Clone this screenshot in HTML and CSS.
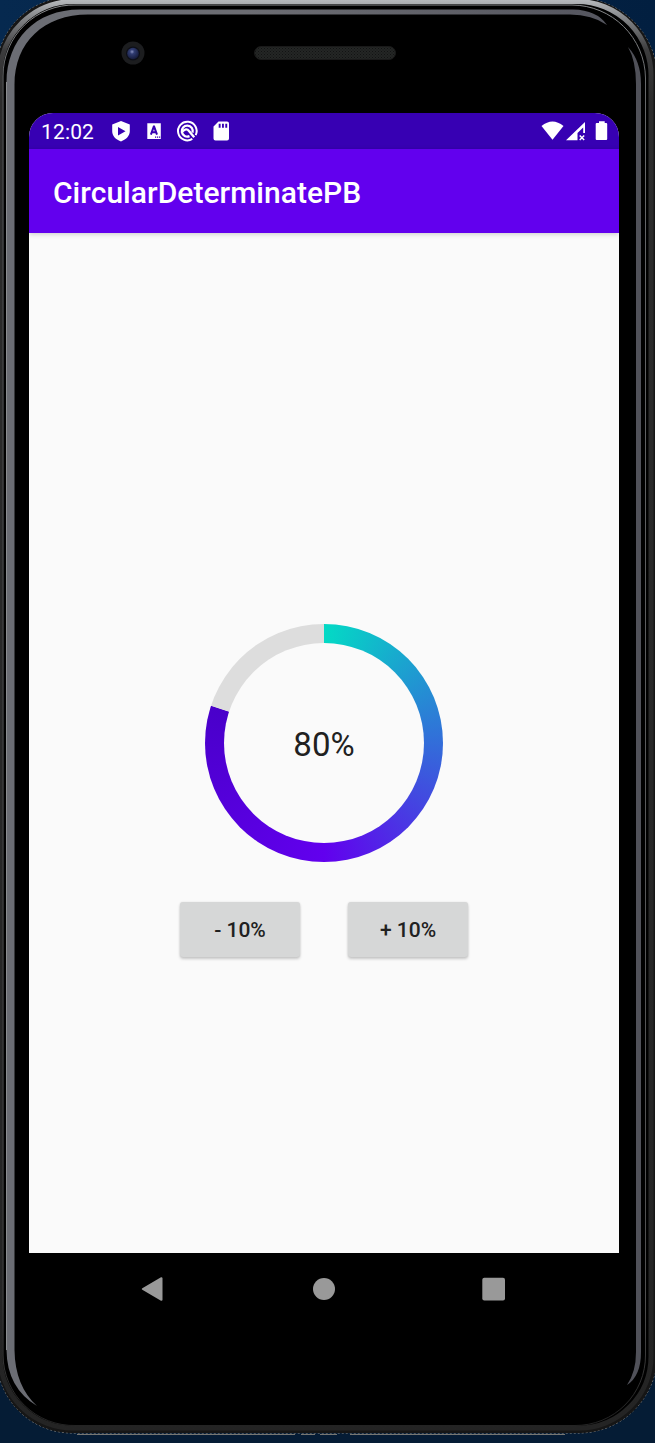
FILE: index.html
```html
<!DOCTYPE html>
<html lang="en">
<head>
<meta charset="utf-8">
<title>CircularDeterminatePB</title>
<link rel="stylesheet" href="styles.css">
</head>
<body>
<div class="device">
  <svg class="frame" viewBox="0 0 655 1443" aria-hidden="true">
    <defs>
      <linearGradient id="edge" gradientUnits="userSpaceOnUse" x1="0" y1="0" x2="0" y2="1443">
        <stop offset="0" stop-color="#b6b9bc"/><stop offset=".012" stop-color="#85878a"/><stop offset=".035" stop-color="#3c3c3d"/><stop offset=".07" stop-color="#2c2c2c"/><stop offset="1" stop-color="#242424"/>
      </linearGradient>
      <linearGradient id="line" gradientUnits="userSpaceOnUse" x1="0" y1="0" x2="0" y2="1443">
        <stop offset="0" stop-color="#8a8c8e"/><stop offset=".06" stop-color="#66686a"/><stop offset=".9" stop-color="#505050"/><stop offset=".98" stop-color="#242424"/>
      </linearGradient>
      <linearGradient id="rim" x1="0" x2="1" y1="0" y2="0">
        <stop offset="0" stop-color="#6b6d74"/><stop offset=".4" stop-color="#6c6d73"/><stop offset="1" stop-color="#55565f"/>
      </linearGradient>
      <pattern id="mesh" width="3" height="3" patternUnits="userSpaceOnUse">
        <rect width="3" height="3" fill="#242625"/><path d="M0 0h1v1H0zM1.5 1.5h1v1h-1z" fill="#121313"/>
      </pattern>
      <radialGradient id="lens" cx=".42" cy=".35" r=".65">
        <stop offset="0" stop-color="#8790c0"/><stop offset=".3" stop-color="#303c72"/><stop offset="1" stop-color="#151b3b"/>
      </radialGradient>
    </defs>
    <path d="M69-2H577A80 80 0 0 1 657 78V1355A78 78 0 0 1 579 1433H72A75 75 0 0 1-3 1358V70A72 72 0 0 1 69-2Z" fill="#111" stroke="#8b8985" stroke-width="1" stroke-dasharray="2 2"/>
    <path d="M69-2H577A80 80 0 0 1 657 78V1355A78 78 0 0 1 579 1433H72A75 75 0 0 1-3 1358V70A72 72 0 0 1 69-2Z" fill="#161616"/>
    <path d="M74 1.500H577A74 74 0 0 1 651 78V1355A72 72 0 0 1 579 1428H74A73 73 0 0 1 0 1355V74A74 74 0 0 1 74 1.500Z" fill="#000" stroke="url(#edge)" stroke-width="5"/>
    <path d="M76 5H572A74 74 0 0 1 645.500 78V1355A70 70 0 0 1 575 1425.500H76A71 71 0 0 1 3 1355V76A71 71 0 0 1 76 5Z" fill="#000" stroke="url(#line)" stroke-width="1"/>
    <path d="M607 25Q592 14.500 570 14.500H88C44 14.500 14.500 42 14.500 85V1350Q15 1386 37 1406Q7 1388 6.500 1350V82C7 40 35 9.500 80 9.500H573Q597 10 607 25Z" fill="url(#rim)"/>
    <path d="M6.500 82V1350" stroke="#8b8d90" fill="none"/>
    <path d="M628 47Q641 61 641 84V1352Q641 1376 627 1385Q636 1372 636 1352V84Q636 61 628 47Z" fill="#505159"/>
    <path d="M77 1434.500H295M301 1434.500H315M320 1434.500H337M350 1434.500H565" stroke="#777672" fill="none"/>
    <rect x="254.500" y="46.500" width="141" height="13" rx="6.500" fill="url(#mesh)" stroke="#191919"/>
    <circle cx="133" cy="53" r="11.500" fill="#1c1d1f"/>
    <circle cx="133" cy="53.500" r="7" fill="#0d0f18"/>
    <circle cx="133" cy="53.500" r="5.800" fill="url(#lens)"/>
  </svg>

  <main class="screen">
    <header class="status">
      <span class="clock">12:02</span>
      <svg class="notices" viewBox="0 0 120 24" aria-hidden="true">
        <path fill="#fff" fill-rule="evenodd" d="M10 2l8.800 3.400v6.800c0 4.300-3.200 8-8.800 10.300-5.800-2.300-8.800-6-8.800-10.300V5.400zM7 8v8.400l7.500-4.200z"/>
        <path fill="#fff" d="M36.300 4.300h13.500v15.700H36.300z"/>
        <path fill="none" stroke="#3700b3" stroke-width="2" d="M39.900 15.600l2.900-8h.3l2.900 8M41 13.200h4"/>
        <path fill="#3700b3" d="M44 17.500h1.200v1.200H44zM46 17.500h1.200v1.200H46zM48 17.500h1.200v1.200H48z"/>
        <path fill="none" stroke="#fff" stroke-width="2" d="M81.300 19.900A9.300 9.300 0 1 1 84.700 16.100"/>
        <path fill="none" stroke="#fff" stroke-width="2.300" d="M78.500 17.100A5.500 5.500 0 1 1 81.500 13.700"/>
        <path fill="none" stroke="#fff" stroke-width="2.300" d="M71.500 12.600q3.800-4.200 6.500-.6l5.200 6.300"/>
        <path fill="#fff" fill-rule="evenodd" d="M107.500 2.500h8.500q2 0 2 2v15q0 2-2 2h-11.500q-2 0-2-2V7.600zM107.700 4.700v4h1.900v-4zM111 4.700v4h1.900v-4zM114.300 4.700v4h1.900v-4z"/>
      </svg>
      <svg class="signals" viewBox="0 0 67 24" aria-hidden="true">
        <path fill="#fff" d="M.5 7q11-9 22 0L11.500 20.800z"/>
        <path fill="#fff" fill-rule="evenodd" d="M25 21.200L44 3v11h-1.800V8.400L36.500 14v7.200z"/>
        <path fill="none" stroke="#fff" stroke-width="1.500" d="M38.700 16.500l4.500 4.500M43.200 16.500l-4.500 4.500"/>
        <path fill="#fff" d="M58 2.300h5.700v1.700h1.500q1 0 1 1v15q0 1-1 1h-9.500q-1 0-1-1V5q0-1 1-1H58z"/>
      </svg>
    </header>
    <div class="appbar"><h1 class="title">CircularDeterminatePB</h1></div>
    <section class="content">
      <div class="ring"><div class="ring-hole">80%</div></div>
      <div class="actions">
        <button class="btn" type="button">- 10%</button>
        <button class="btn" type="button">+ 10%</button>
      </div>
    </section>
  </main>

  <nav class="nav">
    <svg class="nav-icon" viewBox="0 0 26 26"><path fill="#999" stroke="#999" stroke-width="2" stroke-linejoin="round" d="M2.800 13L21.500 2.200v21.600z"/></svg>
    <svg class="nav-icon" viewBox="0 0 26 26"><circle cx="13" cy="13" r="11" fill="#999"/></svg>
    <svg class="nav-icon" viewBox="0 0 26 26"><rect x="1.300" y="1.800" width="22.700" height="22.700" rx="2" fill="#999"/></svg>
  </nav>
</div>
</body>
</html>
```
FILE: styles.css
```css
* { box-sizing: border-box; }

body {
  margin: 0;
  background: linear-gradient(90deg, #06294f, #021f40);
  font-family: Roboto, "Liberation Sans", sans-serif;
}

.device {
  position: relative;
  width: 655px;
  height: 1443px;
  padding: 113px 36px 0 29px;
  overflow: hidden;
  background: linear-gradient(transparent 1300px, #051c35 1380px);
}

.frame {
  position: absolute;
  inset: 0;
  width: 655px;
  height: 1443px;
}

.screen {
  position: relative;
  display: flex;
  flex-direction: column;
  height: 1140px;
  overflow: hidden;
  border-radius: 24px 24px 0 0;
  background: #fafafa;
}

.status {
  display: flex;
  align-items: center;
  height: 36px;
  padding: 0 11px 0 12px;
  background: #3700b3;
  color: #fff;
}

.clock {
  width: 70px;
  font-size: 21px;
  line-height: 36px;
  letter-spacing: .15px;
  padding-top: 2px;
}

.notices { width: 120px; height: 24px; }
.signals { width: 67px; height: 24px; margin-left: auto; }

.appbar {
  display: flex;
  align-items: center;
  height: 84px;
  padding: 4px 24px 0;
  background: #6200ee;
  box-shadow: 0 1px 5px rgba(0, 0, 0, .2);
}

.title {
  margin: 0;
  color: #fff;
  font-size: 30px;
  font-weight: 500;
  line-height: 36px;
  letter-spacing: .04px;
}

.content {
  display: flex;
  flex: 1;
  flex-direction: column;
  align-items: center;
  padding-top: 391px;
}

.ring {
  display: flex;
  align-items: center;
  justify-content: center;
  width: 238px;
  height: 238px;
  border-radius: 50%;
  background: conic-gradient(#03dac5, #6200ee 50%, #4900ca 80%, #ddd 80.1%);
}

.ring-hole {
  width: 200px;
  height: 200px;
  padding-top: 2px;
  border-radius: 50%;
  background: #fafafa;
  color: #212121;
  font-size: 33px;
  line-height: 200px;
  text-align: center;
}

.actions {
  display: flex;
  gap: 48px;
  margin-top: 40px;
}

.btn {
  width: 120px;
  height: 55px;
  padding: 0;
  border: 0;
  border-radius: 3px;
  background: #d6d7d7;
  box-shadow: 0 2px 3px rgba(0, 0, 0, .2), 0 0 2px rgba(0, 0, 0, .1);
  color: #212121;
  font: 500 21px/30px Roboto, "Liberation Sans", sans-serif;
}

.nav {
  position: relative;
  display: flex;
  align-items: center;
  justify-content: space-between;
  height: 72px;
  padding: 0 112px 0 111px;
}

.nav-icon { width: 26px; height: 26px; }
```
